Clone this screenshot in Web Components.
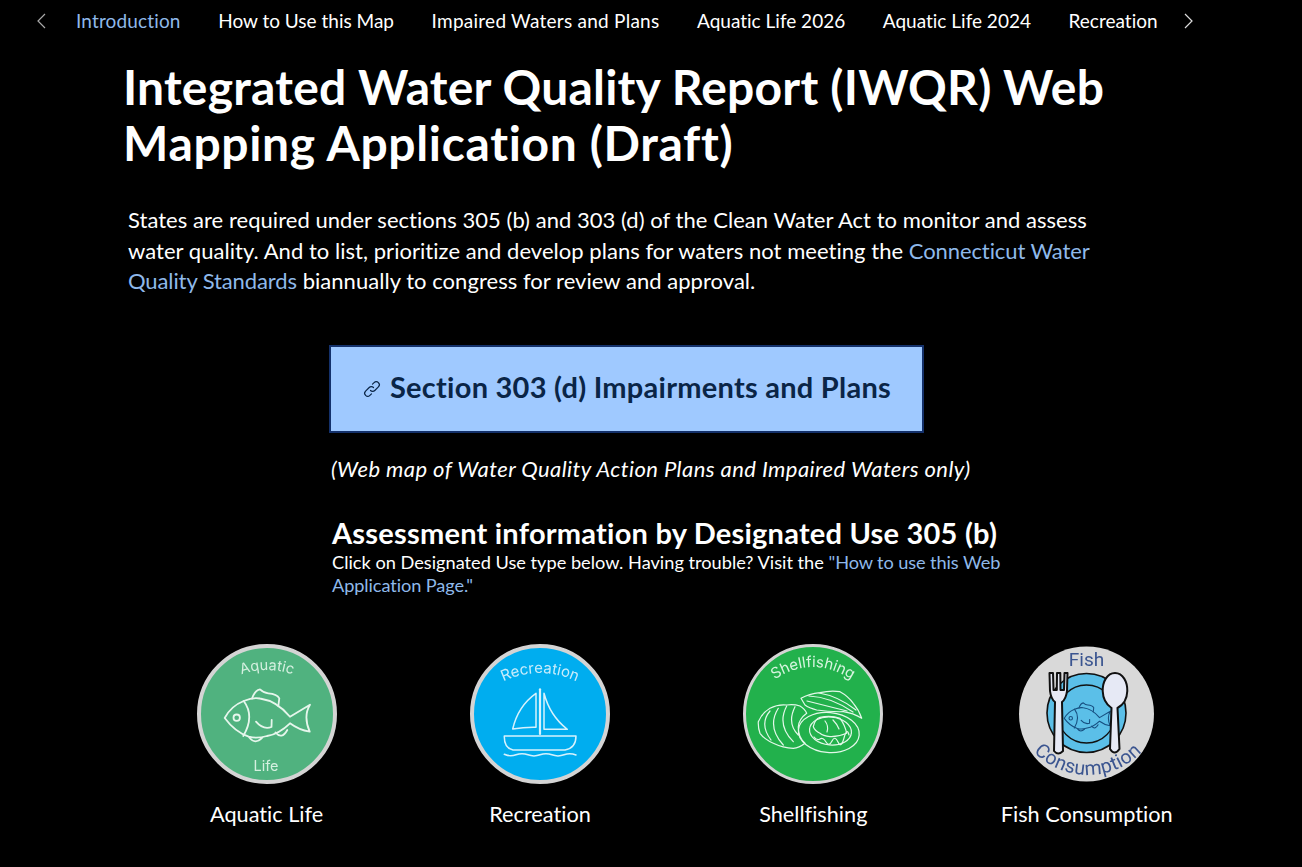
<!DOCTYPE html>
<html>
<head>
<meta charset="utf-8">
<title>IWQR</title>
<style>
  html, body { margin: 0; background: #000; }
  body { font-family: Lato, "Open Sans", sans-serif; color: #fff; height: 867px; overflow: hidden; font-variant-ligatures: none; }
  iwqr-intro a { color: #8fb9ea; text-decoration: none; letter-spacing: -.1px; }
  iwqr-intro .wide { letter-spacing: .65px; }
</style>
</head>
<body>
<iwqr-nav>
  <iwqr-tab active>Introduction</iwqr-tab>
  <iwqr-tab>How to Use this Map</iwqr-tab>
  <iwqr-tab style="letter-spacing:.25px">Impaired Waters and Plans</iwqr-tab>
  <iwqr-tab>Aquatic Life 2026</iwqr-tab>
  <iwqr-tab>Aquatic Life 2024</iwqr-tab>
  <iwqr-tab>Recreation</iwqr-tab>
</iwqr-nav>
<iwqr-intro>
  <span slot="title">Integrated Water Quality Report (IWQR) Web <span class="wide">Mapping Application (Draft)</span></span>
  States are required under sections 305 (b) and 303 (d) of the Clean Water Act to monitor and assess water quality. And to list, prioritize and develop plans for waters not meeting the <a href="#">Connecticut Water Quality Standards</a> biannually to congress for review and approval.
</iwqr-intro>
<iwqr-impairments></iwqr-impairments>
<iwqr-uses>
  <iwqr-use label="Aquatic Life">
    <svg viewBox="0 0 140 140" width="140" height="140">
      <circle cx="70" cy="70" r="68" fill="#50b27f" stroke="#d4d4d4" stroke-width="4"/>
      <defs><path id="a1" d="M28 38 Q70 14 112 38"/></defs>
      <text font-family="Inter, sans-serif" font-size="14.5" fill="#d5f0e0"><textPath href="#a1" startOffset="50%" text-anchor="middle">Aquatic</textPath></text>
      <text x="69" y="127" text-anchor="middle" font-family="Inter, sans-serif" font-size="14.5" fill="#d5f0e0">Life</text>
      <g fill="none" stroke="#e6f6ec" stroke-width="1.8" stroke-linecap="round" stroke-linejoin="round">
        <path d="M27.7 74 Q34 62 46.7 57 Q56 53 63 54.5 Q80 57 93 72.7 L113 60.7 Q106 72 112.7 87.7 Q102 86 93 79.3 Q82 90 70 92 Q60 95 51.7 92.7 Q38 88 27.7 74Z"/>
        <path d="M46.7 57 Q58 72 46.3 92"/>
        <circle cx="39.7" cy="73.7" r="3.2"/>
        <path d="M55 54.5 Q58 46 63 45.3 Q67 49 71.3 49.3 Q80 50 82.3 54.3 L81.3 62"/>
        <path d="M59 77.7 Q66 86 74.5 83 L74.7 76"/>
        <path d="M52.3 93.5 Q58 101 65.3 93.7"/>
        <path d="M78.5 88.5 Q84.7 96 90.3 86"/>
      </g>
    </svg>
  </iwqr-use>
  <iwqr-use label="Recreation">
    <svg viewBox="0 0 140 140" width="140" height="140">
      <circle cx="70" cy="70" r="68" fill="#00adef" stroke="#d4d4d4" stroke-width="4"/>
      <defs><path id="a2" d="M28 40 Q70 18 112 40"/></defs>
      <text font-family="Inter, sans-serif" font-size="15" fill="#c8ecfb"><textPath href="#a2" startOffset="50%" text-anchor="middle">Recreation</textPath></text>
      <g fill="none" stroke="#d6f2fd" stroke-width="1.5" stroke-linecap="round" stroke-linejoin="round">
        <path d="M66 49.3 Q48 62 42.7 85 Q55 83 66 83.3Z"/>
        <path d="M74 49.3 Q80 72 97.3 85.3 L74 85.3Z"/>
        <path d="M70 45.3 V90" stroke-width="2.2"/>
        <path d="M34.3 92 H106 Q106 104 95 106 H43 Q34 104 34.3 92Z"/>
        <path d="M34.3 110.3 Q40 113 46 110.8 T58 110.8 T70 110.8 T82 110.8 T94 110.8 T106 111"/>
      </g>
    </svg>
  </iwqr-use>
  <iwqr-use label="Shellfishing">
    <svg viewBox="0 0 140 140" width="140" height="140">
      <circle cx="70" cy="70" r="68.5" fill="#22b14c" stroke="#d4d4d4" stroke-width="3"/>
      <defs><path id="a3" d="M28 38 Q70 8 112 38"/></defs>
      <text font-family="Inter, sans-serif" font-size="15" fill="#d8f5e0"><textPath href="#a3" startOffset="50%" text-anchor="middle">Shellfishing</textPath></text>
      <g fill="none" stroke="#e3f8e9" stroke-width="1.2" stroke-linecap="round" stroke-linejoin="round">
        <path d="M15.3 77.7 Q19 69 27 64.3 Q35 60 43.7 61 Q51 60 57 62 Q62 65 63.7 69.3 Q56 75 55.3 82.7 Q55 93 62 99.3 Q56 104 50.3 104.3 Q40 104 30.3 99.3 Q21 95 17 89.3 Q15 84 15.3 77.7Z"/>
        <path d="M52 62.7 Q43.7 79.3 55.3 91 M43.7 62 Q33.7 81 50.3 97.7 M35.3 64.3 Q23.7 82.7 40.3 101 M27 67 Q16 80 28 96"/>
        <path d="M58 54.3 Q66 50 77 48.7 Q88 46 97 47.7 Q105 52 110.3 59.3 Q116 66 118.7 74.3 Q110 69 100.3 67.7 Q86 68 73.7 66 Q66 64 62 61Z"/>
        <path d="M66 52 Q88 53 110 68 M76 49 Q95 52 113 66 M64 57 Q84 62 104 67"/>
        <ellipse cx="85.8" cy="88.5" rx="30.5" ry="20" transform="rotate(5 85.8 88.5)"/>
        <ellipse cx="87.5" cy="87" rx="21" ry="14" transform="rotate(5 87.5 87)"/>
        <path d="M70.3 82.7 Q72 75 77 73.3 Q88 71 97 74.3 Q102 81 103.7 89.3 Q95 93 87 92.7 Q80 92 77 89.3 Q72 87 70.3 82.7Z"/>
        <path d="M82 77 Q86 82 84 88 M90 76 Q94 80 96 85"/>
        <path d="M71 93 Q74 97 77 95 T83 98 T89 97 T95 98 T101 94 T106 91"/>
      </g>
    </svg>
  </iwqr-use>
  <iwqr-use label="Fish Consumption">
    <svg viewBox="0 0 140 140" width="140" height="140">
      <circle cx="69.5" cy="70" r="67.5" fill="#d9d9d9"/>
      <circle cx="69.5" cy="69" r="39.5" fill="#5bbfe8" stroke="#111" stroke-width="1.6"/>
      <circle cx="69.5" cy="70" r="29" fill="#5bbfe8" stroke="#111" stroke-width="1.3"/>
      <g transform="translate(32.3 34.4) scale(.54)" fill="none" stroke="#174f80" stroke-width="2" stroke-linecap="round" stroke-linejoin="round">
        <path d="M27.7 74 Q34 62 46.7 57 Q56 53 63 54.5 Q80 57 93 72.7 L113 60.7 Q106 72 112.7 87.7 Q102 86 93 79.3 Q82 90 70 92 Q60 95 51.7 92.7 Q38 88 27.7 74Z"/>
        <path d="M46.7 57 Q58 72 46.3 92"/>
        <circle cx="39.7" cy="73.7" r="3.2"/>
        <path d="M55 54.5 Q58 46 63 45.3 Q67 49 71.3 49.3 Q80 50 82.3 54.3 L81.3 62"/>
        <path d="M59 77.7 Q66 86 74.5 83 L74.7 76"/>
        <path d="M52.3 93.5 Q58 101 65.3 93.7"/>
        <path d="M78.5 88.5 Q84.7 96 90.3 86"/>
      </g>
      <path d="M32.5 29 L33 47 Q34 55 38 58 L37 107 Q41 112 46 107 L45 58 Q49 55 50 47 L50.5 29 L47.5 29 L47 46 L43.5 46 L43.3 29 L40 29 L39.8 46 L36.5 46 L36 29Z" fill="#e6e9f5" stroke="#111" stroke-width="2" stroke-linejoin="round"/>
      <path d="M98 29 C90 29 85.5 38 85.7 47 C86 56 90 61 94.5 64 L93 105 Q97.5 112 102.5 105 L100.5 64 C106 61 110 56 110.3 47 C110.5 38 106 29 98 29Z" fill="#e6e9f5" stroke="#111" stroke-width="2"/>
      <text x="69.5" y="21.5" text-anchor="middle" font-family="Roboto, sans-serif" font-size="19" fill="#3b5590">Fish</text>
      <defs><path id="a4" d="M7 95 A75 75 0 0 0 135 95"/></defs>
      <text font-family="Roboto, sans-serif" font-size="19.5" letter-spacing=".4" fill="#3b5590"><textPath href="#a4" startOffset="50%" text-anchor="middle">Consumption</textPath></text>
    </svg>
  </iwqr-use>
</iwqr-uses>
<script>
class IwqrTab extends HTMLElement {
  constructor() {
    super();
    this.attachShadow({ mode: 'open' });
    this.shadowRoot.innerHTML = `
      <style>
        :host { display: block; font-size: 19px; color: #fff; white-space: nowrap; cursor: pointer; }
        :host([active]) { color: #8fb9ea; letter-spacing: .15px; }
      </style>
      <slot></slot>`;
  }
}

class IwqrNav extends HTMLElement {
  constructor() {
    super();
    this.attachShadow({ mode: 'open' });
    this.shadowRoot.innerHTML = `
      <style>
        :host { display: flex; align-items: center; height: 42px; padding-left: 36px; width: 1160px; }
        svg { flex: none; fill: none; stroke-width: 1.2; }
        .prev { stroke: #aaa; margin-right: 30px; }
        .next { stroke: #ddd; margin-left: 23px; }
        .tabs { display: flex; gap: 37.6px; overflow: hidden; width: 1085px; flex: none; margin-top: -2px; }
      </style>
      <svg class="prev" width="10" height="16" viewBox="0 0 10 16"><path d="M9 1 L2 8 L9 15"/></svg>
      <div class="tabs"><slot></slot></div>
      <svg class="next" width="10" height="16" viewBox="0 0 10 16"><path d="M1 1 L8 8 L1 15"/></svg>`;
  }
}

class IwqrIntro extends HTMLElement {
  constructor() {
    super();
    this.attachShadow({ mode: 'open' });
    this.shadowRoot.innerHTML = `
      <style>
        :host { display: block; padding-left: 124px; width: 1000px; }
        h1 { margin: 0 0 0 -1px; font-size: 48px; letter-spacing: .2px; line-height: 56px; font-weight: 700; padding-top: 17px; }
        p { margin: 34px 0 0 4px; font-size: 22px; letter-spacing: .04px; line-height: 30.5px; width: 970px; }
      </style>
      <h1><slot name="title"></slot></h1>
      <p><slot></slot></p>`;
  }
}

class IwqrImpairments extends HTMLElement {
  constructor() {
    super();
    this.attachShadow({ mode: 'open' });
    this.shadowRoot.innerHTML = `
      <style>
        :host { display: block; margin: 48px 0 0 329px; width: 720px; }
        a { display: flex; align-items: center; box-sizing: border-box; width: 595px; height: 88px; gap: 8px; padding-left: 31px;
            background: #9fc9ff; border: 2px solid #14316b; color: #0a2547; text-decoration: none; font-size: 29px; letter-spacing: .25px; font-weight: 700; }
        a span { margin-bottom: 5px; }
        svg { flex: none; fill: none; stroke: #0a2547; stroke-width: 1.2; stroke-linecap: round; }
        em { display: block; margin: 22px 0 0 2px; font-size: 22px; letter-spacing: .43px; line-height: 28px; }
      </style>
      <a href="#">
        <svg width="20" height="20" viewBox="0 0 20 20">
          <path d="M8.5 11.5 a3 3 0 0 0 4.3 0 l3.6 -3.6 a3 3 0 0 0 -4.3 -4.3 l-1.6 1.6"/>
          <path d="M11.5 8.5 a3 3 0 0 0 -4.3 0 l-3.6 3.6 a3 3 0 0 0 4.3 4.3 l1.6 -1.6"/>
        </svg>
        <span>Section 303 (d) Impairments and Plans</span>
      </a>
      <em>(Web map of Water Quality Action Plans and Impaired Waters only)</em>`;
  }
}

class IwqrUse extends HTMLElement {
  constructor() {
    super();
    this.attachShadow({ mode: 'open' });
    this.shadowRoot.innerHTML = `
      <style>
        :host { display: flex; flex-direction: column; align-items: center; gap: 17px; width: 273.33px; flex: none; }
        .icon { width: 140px; height: 140px; }
        ::slotted(svg) { filter: blur(.35px); }
        .label { font-size: 21.7px; line-height: 26px; white-space: nowrap; }
      </style>
      <div class="icon"><slot></slot></div>
      <div class="label"></div>`;
  }

  connectedCallback() {
    this.shadowRoot.querySelector('.label').textContent = this.getAttribute('label');
  }
}

class IwqrUses extends HTMLElement {
  constructor() {
    super();
    this.attachShadow({ mode: 'open' });
    this.shadowRoot.innerHTML = `
      <style>
        :host { display: block; }
        .head { margin: 32px 0 0 332px; width: 690px; }
        h2 { margin: 0; font-size: 29px; letter-spacing: .22px; line-height: 36px; font-weight: 700; }
        p { margin: 0; font-size: 18.2px; line-height: 23px; }
        a { color: #8fb9ea; text-decoration: none; letter-spacing: -.1px; }
        .row { display: flex; margin: 47px 0 0 130px; }
      </style>
      <div class="head">
        <h2>Assessment information by Designated Use 305 (b)</h2>
        <p>Click on Designated Use type below. Having trouble? Visit the <a href="#">"How to use this Web Application Page."</a></p>
      </div>
      <div class="row"><slot></slot></div>`;
  }
}

customElements.define('iwqr-tab', IwqrTab);
customElements.define('iwqr-nav', IwqrNav);
customElements.define('iwqr-intro', IwqrIntro);
customElements.define('iwqr-impairments', IwqrImpairments);
customElements.define('iwqr-use', IwqrUse);
customElements.define('iwqr-uses', IwqrUses);
</script>
</body>
</html>
